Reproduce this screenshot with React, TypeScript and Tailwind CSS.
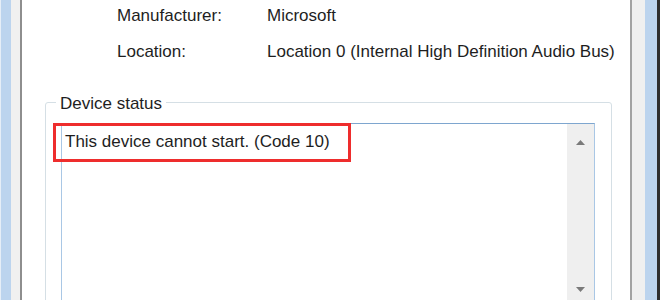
export default function App() {
    const font = { fontFamily: '"Liberation Sans", Arial, sans-serif' }

    return (
        <div className="relative flex h-[300px] w-[660px] overflow-hidden bg-white text-[17px] leading-[20px] text-[#1e1e1e]" style={font}>
            {/* left window frame */}
            <div className="w-[1px] bg-[#e6eef7]" />
            <div className="w-[10px] bg-[#bcd4ee]" />
            <div className="w-[9px] bg-[#f0f0f0]" />
            <div className="w-[2px] bg-[#8e8e8e]" />

            {/* dialog page */}
            <div className="flex flex-1 flex-col bg-white">
                <div className="grid grid-cols-[150px_1fr] gap-y-[16px] pl-[95px] pt-[6px]">
                    <span>Manufacturer:</span>
                    <span>Microsoft</span>
                    <span>Location:</span>
                    <span>Location 0 (Internal High Definition Audio Bus)</span>
                </div>

                <fieldset className="ml-[23px] mr-[18px] mt-[29px] flex-1 rounded-[3px] border border-[#d5dfe5]">
                    <legend className="ml-[10px] px-[4px] pt-[3px]">Device status</legend>
                    <div className="ml-[15px] mr-[16px] mt-[9px] flex h-[200px] border border-[#a9c7e5] border-t-[#7ea6cf]">
                        <div className="flex-1 pl-[3px] pt-[8px]">This device cannot start. (Code 10)</div>
                        <div className="flex w-[27px] flex-col items-center justify-between bg-[#efefef] pb-[30px] pt-[16px]">
                            <svg width="9" height="5" viewBox="0 0 9 5">
                                <path d="M0 5 L4.5 0 L9 5 Z" fill="#7a7a7a" />
                            </svg>
                            <svg width="9" height="5" viewBox="0 0 9 5">
                                <path d="M0 0 L9 0 L4.5 5 Z" fill="#7a7a7a" />
                            </svg>
                        </div>
                    </div>
                </fieldset>
            </div>

            {/* right window frame */}
            <div className="w-[2px] bg-[#a3a3a3]" />
            <div className="w-[13px] bg-[#f0f0f0]" />
            <div className="w-[12px] bg-[#bcd4ee]" />
            <div className="w-[3px] bg-[#2e2e2e]" />

            {/* red highlight annotation */}
            <div className="absolute left-[53px] top-[123px] h-[39px] w-[298px] border-[3px] border-[#ee2d2d]" />
        </div>
    )
}
